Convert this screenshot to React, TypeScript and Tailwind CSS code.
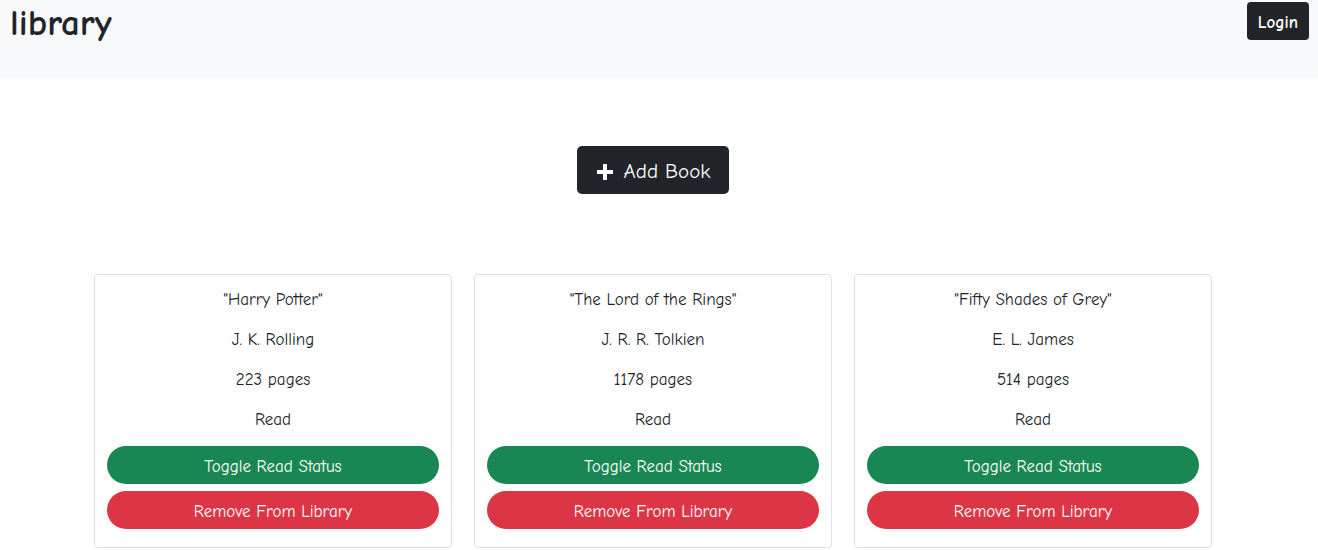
const books = [
  { title: 'Harry Potter', author: 'J. K. Rolling', pages: 223, read: true },
  { title: 'The Lord of the Rings', author: 'J. R. R. Tolkien', pages: 1178, read: true },
  { title: 'Fifty Shades of Grey', author: 'E. L. James', pages: 514, read: true },
]

const font = { fontFamily: '"Comic Sans MS", "Comic Neue", "Open Sans", sans-serif' }

export default function App() {
  return (
    <div className="min-h-[550px] bg-white text-[#212529]" style={font}>
      <header className="flex h-[78px] items-start justify-between bg-[#f8f9fa] pl-[10px] pr-[9px]">
        <h1 className="mt-[0px] text-[37px] font-bold leading-[46px]">library</h1>
        <button className="mt-[2px] h-[38px] rounded-[4px] bg-[#212529] px-[11px] pt-[3px] text-[17px] font-bold text-white">
          Login
        </button>
      </header>

      <main className="pr-[12px]">
        <div className="flex justify-center pt-[68px]">
          <button className="flex h-[48px] w-[152px] items-center justify-center gap-[10px] rounded-[5px] bg-[#212529] pt-[3px] text-[21px] text-white">
            <svg width="18" height="18" viewBox="0 0 18 18" fill="white" className="mt-[1px]">
              <rect x="7" y="1" width="4" height="16" />
              <rect x="1" y="7" width="16" height="4" />
            </svg>
            <span>Add Book</span>
          </button>
        </div>

        <div className="mx-auto mt-[80px] grid w-[1118px] grid-cols-3 gap-[22px]">
          {books.map((b) => (
            <div
              key={b.title}
              className="flex flex-col rounded-[4px] border border-[#dee2e6] px-[12px] pt-[13px] pb-[18px] text-center text-[17px] leading-[24px]"
            >
              <p className="mb-[16px]">"{b.title}"</p>
              <p className="mb-[16px]">{b.author}</p>
              <p className="mb-[16px]">{b.pages} pages</p>
              <p className="mb-[14px]">{b.read ? 'Read' : 'Not read'}</p>
              <button className="h-[38px] rounded-full bg-[#198754] pt-[3px] text-white">Toggle Read Status</button>
              <button className="mt-[7px] h-[38px] rounded-full bg-[#dc3545] pt-[3px] text-white">Remove From Library</button>
            </div>
          ))}
        </div>
      </main>
    </div>
  )
}
